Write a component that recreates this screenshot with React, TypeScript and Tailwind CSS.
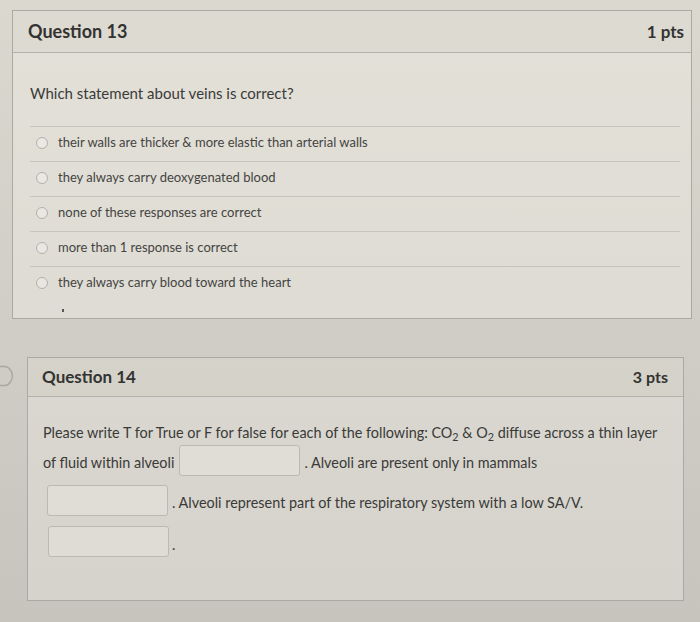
import React from 'react';

type Option = { id: number; label: string };

const OPTIONS: Option[] = [
  { id: 1, label: 'their walls are thicker & more elastic than arterial walls' },
  { id: 2, label: 'they always carry deoxygenated blood' },
  { id: 3, label: 'none of these responses are correct' },
  { id: 4, label: 'more than 1 response is correct' },
  { id: 5, label: 'they always carry blood toward the heart' },
];

const BlankInput: React.FC = () => (
  <div className="w-[121px] h-[31px] shrink-0 rounded-[3px] border border-[#bcb9b2] bg-[#ece9e1]/40" />
);

const FlagMarker: React.FC = () => (
  <svg className="w-[14px] h-[22px] mt-[8px] shrink-0" viewBox="0 0 14 22" fill="none">
    <path
      d="M0 1.5 H5 C9 1.5 12.5 7 12.5 11 C12.5 15 9 20.5 5 20.5 H0"
      stroke="#a9a7a2"
      strokeWidth={1.4}
      strokeLinejoin="round"
    />
  </svg>
);

export default function App() {
  return (
    <div className="w-[700px] h-[622px] overflow-hidden bg-gradient-to-b from-[#dbd8cf] to-[#c6c4bd] pt-[10px] font-['Lato',sans-serif]">
      {/* Question 13 */}
      <div className="ml-[12px] w-[680px] h-[309px] border border-[#aba9a3] bg-[#ece9e1]/50 flex flex-col">
        <div className="h-[42px] shrink-0 flex items-center justify-between pl-[15px] pr-[7px] border-b border-[#b3b1ab] bg-[#b8b4a8]/[0.12]">
          <h2 className="text-[18px] font-bold text-[#333331]">Question 13</h2>
          <span className="text-[17px] font-bold text-[#333331]">1 pts</span>
        </div>
        <div className="pl-[17px] pr-[11px] pt-[30px]">
          <p className="text-[15px] leading-[20px] text-[#3b3b39]">Which statement about veins is correct?</p>
          <ul className="mt-[23px]">
            {OPTIONS.map((opt) => (
              <li
                key={opt.id}
                className="h-[35px] flex items-center gap-[10px] pl-[6px] pb-[2px] border-t border-[#c6c4be]"
              >
                <span className="w-[12px] h-[12px] rounded-full border border-[#b3b1ac] bg-white/30" />
                <span className="text-[13px] text-[#444442]">{opt.label}</span>
              </li>
            ))}
          </ul>
          <div className="mt-[8px] ml-[32px] w-[2px] h-[3px] bg-[#555]" />
        </div>
      </div>

      {/* Question 14 */}
      <div className="mt-[38px] flex items-start">
        <FlagMarker />
        <div className="ml-[13px] w-[657px] h-[244px] border border-[#aba9a3] bg-[#ece9e1]/40 flex flex-col">
          <div className="h-[39px] shrink-0 flex items-center justify-between pl-[14px] pr-[15px] border-b border-[#b3b1ab] bg-[#b8b4a8]/[0.12]">
            <h2 className="text-[17px] font-bold text-[#333331]">Question 14</h2>
            <span className="text-[16px] font-bold text-[#333331]">3 pts</span>
          </div>
          <div className="pl-[15px] pt-[24px] text-[14.4px] text-[#3a3a38]">
            <p className="h-[24px] leading-[24px]">
              Please write T for True or F for false for each of the following: CO<sub>2</sub> &amp; O<sub>2</sub> diffuse
              across a thin layer
            </p>
            <div className="flex items-center">
              <span className="pt-[4px]">of fluid within alveoli</span>
              <div className="ml-[5px]">
                <BlankInput />
              </div>
              <span className="ml-[4px] pt-[4px]">. Alveoli are present only in mammals</span>
            </div>
            <div className="mt-[9px] flex items-center">
              <div className="ml-[4px]">
                <BlankInput />
              </div>
              <span className="ml-[4px] pt-[4px]">. Alveoli represent part of the respiratory system with a low SA/V.</span>
            </div>
            <div className="mt-[10px] flex items-center">
              <div className="ml-[5px]">
                <BlankInput />
              </div>
              <span className="ml-[3px] pt-[6px]">.</span>
            </div>
          </div>
        </div>
      </div>
    </div>
  );
}
